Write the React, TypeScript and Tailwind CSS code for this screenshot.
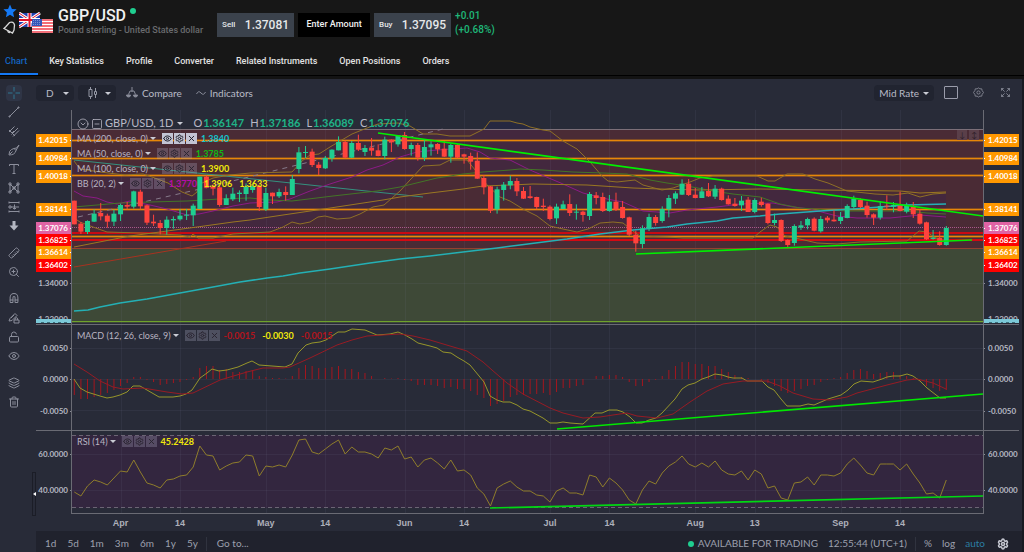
import type { ReactNode } from 'react';
import {
    CircleChevronDown,
    Eye,
    Layers,
    LockOpen,
    Magnet,
    Ruler,
    Settings,
    SquareMinus,
    Trash2,
    X,
    ZoomIn,
} from 'lucide-react';

// plot geometry, in chart units
const LEFT = 72;
const TOP = 110;
const PLOT_WIDTH = 911;
const STEP = 6.606;
const barX = (i: number) => 74.3 + STEP * i;
const priceY = (v: number) => 76 + v / 3;

type Candle = [up: 0 | 1, top: number, bottom: number, high: number, low: number];

const CANDLES: Candle[] = [
    [0, 374, 445, 374, 445], [0, 443, 467, 438, 474], [1, 435, 468, 433, 474], [1, 413, 437, 400, 438],
    [0, 411, 421, 381, 433], [0, 419, 437, 413, 455], [1, 413, 437, 400, 450], [1, 387, 415, 383, 435],
    [0, 387, 392, 378, 400], [1, 346, 392, 344, 398], [0, 347, 391, 341, 400], [0, 388, 440, 386, 447],
    [0, 437, 442, 416, 450], [0, 441, 456, 432, 475], [1, 431, 456, 421, 476], [1, 429, 433, 421, 458],
    [1, 419, 430, 399, 434], [1, 416, 419, 399, 432], [1, 389, 418, 383, 450], [1, 302, 399, 302, 399],
    [0, 302, 335, 298, 337], [0, 332, 338, 325, 358], [0, 334, 387, 330, 392], [1, 367, 387, 355, 387],
    [1, 353, 370, 335, 375], [1, 350, 354, 343, 378], [1, 332, 354, 322, 374], [1, 330, 342, 325, 350],
    [0, 330, 393, 325, 405], [1, 351, 400, 335, 405], [0, 350, 361, 350, 384], [1, 348, 361, 338, 366],
    [0, 348, 357, 331, 374], [1, 309, 357, 297, 357], [1, 229, 279, 213, 292], [1, 228, 231, 210, 246],
    [0, 227, 267, 218, 273], [0, 266, 276, 258, 297], [1, 246, 277, 240, 279], [1, 221, 247, 220, 257],
    [1, 198, 223, 181, 223], [0, 198, 245, 193, 247], [1, 201, 245, 195, 246], [0, 201, 221, 176, 225],
    [1, 216, 228, 207, 240], [0, 215, 224, 186, 239], [0, 223, 240, 205, 241], [1, 191, 240, 182, 250],
    [0, 191, 199, 190, 228], [1, 178, 205, 177, 212], [0, 177, 219, 168, 221], [1, 207, 219, 200, 239],
    [0, 207, 245, 201, 254], [1, 213, 245, 191, 255], [1, 205, 214, 196, 239], [0, 204, 220, 201, 234],
    [0, 218, 242, 195, 243], [1, 207, 242, 203, 260], [0, 207, 245, 205, 247], [0, 235, 242, 233, 263],
    [0, 240, 257, 230, 281], [0, 254, 308, 229, 309], [0, 306, 334, 297, 355], [0, 331, 404, 330, 411],
    [1, 340, 400, 332, 413], [1, 326, 342, 318, 374], [1, 315, 328, 299, 340], [0, 315, 346, 306, 360],
    [0, 345, 368, 333, 369], [0, 361, 366, 330, 368], [0, 363, 393, 362, 400], [0, 389, 393, 368, 405],
    [0, 392, 429, 388, 433], [1, 392, 427, 383, 444], [1, 385, 399, 374, 399], [0, 384, 411, 355, 420],
    [1, 407, 410, 385, 431], [0, 407, 417, 404, 437], [1, 354, 420, 348, 432], [0, 358, 366, 348, 385],
    [0, 363, 405, 350, 408], [1, 377, 405, 357, 407], [0, 377, 401, 350, 405], [0, 393, 426, 375, 428],
    [0, 424, 476, 422, 480], [0, 476, 502, 464, 527], [1, 457, 504, 448, 517], [1, 423, 457, 413, 465],
    [0, 423, 441, 417, 449], [1, 399, 435, 391, 440], [1, 366, 400, 357, 424], [1, 352, 368, 346, 384],
    [1, 323, 356, 310, 357], [0, 323, 357, 309, 360], [0, 356, 366, 336, 367], [1, 346, 366, 333, 366],
    [0, 345, 361, 321, 363], [1, 338, 362, 327, 369], [0, 338, 372, 335, 374], [0, 368, 385, 358, 386],
    [0, 383, 390, 366, 392], [1, 374, 388, 360, 405], [0, 371, 408, 363, 408], [1, 372, 408, 367, 412],
    [0, 377, 387, 365, 392], [0, 383, 441, 382, 445], [1, 432, 441, 413, 448], [0, 432, 495, 430, 498],
    [0, 492, 507, 490, 514], [1, 450, 501, 445, 509], [1, 448, 455, 435, 462], [1, 429, 448, 425, 460],
    [0, 428, 464, 424, 466], [1, 429, 466, 420, 470], [0, 425, 433, 420, 440], [0, 431, 436, 403, 437],
    [1, 423, 435, 408, 444], [1, 390, 426, 385, 427], [1, 368, 393, 359, 398], [0, 372, 393, 367, 396],
    [0, 389, 417, 377, 425], [0, 415, 425, 412, 447], [1, 390, 425, 375, 431], [0, 389, 392, 358, 402],
    [1, 387, 392, 378, 409], [0, 389, 405, 347, 406], [1, 389, 407, 380, 412], [0, 391, 415, 378, 426],
    [0, 413, 443, 401, 446], [0, 439, 490, 437, 492], [1, 485, 489, 462, 491], [0, 486, 507, 466, 509],
    [1, 456, 507, 450, 509],
];

const HISTOGRAM = [
    -16, -20, -20, -18, -16, -14, -11, -7, -4, 2, 2, -1, -3, -6, -5, -4, -3, -1, 2, 11, 13, 13, 9, 10, 7, 7, 8, 9, 3,
    2, 1, 1, 0.5, 3, 11, 14, 13, 11, 11, 12, 13, 10, 10, 7, 6, 3, 0, 1, 0.5, 1, -1, -2, -6, -6, -6, -7, -9, -8, -10,
    -10, -12, -16, -19, -27, -25, -22, -18, -16, -16, -15, -15, -14, -16, -13, -9, -9, -7, -6, 0, 3, 3, 4, 4, 2, -3,
    -7, -7, -3, -1, 3, 9, 13, 17, 17, 15, 15, 13, 13, 10, 7, 4, 2, 1, 0, -1, -4, -7, -12, -14, -12, -10, -7, -6, -3,
    -1, 1, 2, 6, 9, 10, 8, 5, 6, 7, 7, 4, 3, 1, -2, -7, -9, -12, -11,
];

const RSI = [
    492, 496, 486, 480, 482, 485, 478, 471, 472, 460, 472, 483, 485, 488, 480, 479, 476, 475, 467, 446, 455, 456, 470,
    466, 463, 462, 455, 456, 476, 466, 467, 465, 467, 455, 440, 439, 452, 454, 449, 444, 440, 454, 447, 452, 452, 454,
    458, 448, 450, 446, 459, 457, 467, 460, 458, 463, 469, 460, 471, 470, 475, 488, 494, 506, 488, 484, 481, 487, 491,
    491, 495, 496, 502, 491, 488, 493, 493, 495, 475, 477, 487, 478, 483, 490, 500, 504, 490, 481, 484, 473, 466, 462,
    456, 464, 467, 463, 467, 461, 470, 474, 475, 471, 480, 470, 474, 488, 486, 498, 500, 483, 482, 477, 485, 475, 475,
    476, 473, 464, 458, 465, 473, 475, 464, 464, 464, 470, 464, 474, 483, 494, 493, 498, 480,
];

const BB_UPPER =
    '74,161 80,169 100,172 125,175 143,174 152,177 168,183 182,192 192,196 197,192 200,184 213,178 230,175 250,173 292,172 302,161 310,155 319,154 330,147 352,134 367,128 378,124 398,123 410,126 423,134 437,134 450,136 470,136 484,129 490,121 510,121 517,123 523,124 530,127 543,130 550,131 563,141 577,149 590,162 602,176 608,181 617,182 635,180 643,185 662,190 673,188 690,182 700,178 713,176 733,176 757,176 768,181 775,181 787,174 803,174 815,179 828,183 847,191 875,194 893,195 908,193 920,197 933,194 946,193';
const BB_LOWER =
    '74,218 80,222 93,227 107,232 140,233 180,235 190,237 193,234 198,238 213,238 233,234 270,232 283,227 292,222 300,224 310,222 318,217 325,216 337,219 350,218 360,214 373,207 384,205 400,191 410,180 423,166 440,165 450,160 467,160 480,176 488,186 500,197 510,201 523,209 537,216 550,226 563,229 577,232 588,229 600,223 613,222 623,223 633,231 640,236 667,237 683,238 733,238 753,238 760,232 770,225 777,227 785,236 800,239 817,243 837,244 860,242 907,241 919,231 927,232 937,239 946,241';
const BB_MID =
    '74,191 83,196 97,198 107,202 117,204 130,201 150,205 167,209 187,215 199,214 213,211 233,206 250,203 277,202 290,199 310,191 330,184 352,177 367,170 383,165 400,157 417,152 437,150 467,148 480,152 490,158 500,159 510,160 530,170 563,184 583,193 607,199 623,202 643,211 657,212 670,213 687,210 717,207 740,204 773,203 793,207 810,209 837,216 857,218 890,218 920,215 946,217';
const MA_50 =
    '74,207 120,203 150,202 187,201 219,199 250,198 270,200 292,201 333,196 377,191 400,187 437,178 463,174 483,172 510,170 520,169 543,170 573,172 603,173 627,174 650,180 667,183 687,186 713,191 733,194 760,197 780,204 800,208 827,210 847,211 907,211 927,213 946,214';
const MA_100 =
    '74,247 130,236 197,227 233,222 250,220 283,215 317,210 350,205 383,200 400,197 430,193 463,189 483,186 510,185 533,184 587,185 633,188 660,189 700,190 760,189 820,190 900,191 920,193 946,192';
const MA_200 =
    '74,311 88,310 100,307 120,303 147,299 180,293 213,287 240,282 267,278 283,276 300,273 330,269 370,263 400,259 430,256 463,252 497,248 520,245 567,239 600,234 633,230 667,227 687,224 717,221 733,218 760,216 780,214 820,211 853,209 907,205 946,204';
const MACD_LINE =
    '74,379 80,388 87,392 100,396 107,398 113,397 120,395 127,392 133,386 140,386 147,390 159,397 173,397 180,396 186,394 192,390 200,378 207,373 212,369 219,371 227,370 238,367 247,363 252,361 259,365 285,367 292,364 298,353 306,345 312,343 320,342 326,340 338,332 345,332 352,329 365,330 377,335 390,334 398,332 405,335 412,339 418,343 430,346 437,348 443,352 451,353 457,357 464,361 470,365 484,382 490,396 497,400 503,402 510,402 517,405 523,409 530,411 543,418 550,423 557,423 563,422 570,423 583,424 595,413 602,413 609,410 617,410 623,412 630,417 636,423 642,423 649,420 656,418 662,413 675,399 682,389 688,385 695,383 702,379 708,377 715,374 722,375 728,377 733,378 742,378 747,381 762,381 768,387 774,390 781,399 787,406 800,406 808,404 814,405 821,402 828,399 841,395 848,390 854,384 861,381 873,382 882,379 887,377 893,376 900,376 907,374 913,376 920,381 927,388 940,398 946,398';
const MACD_SIGNAL =
    '74,364 87,372 100,381 113,387 123,389 143,388 167,392 182,394 193,393 220,380 247,372 263,368 283,368 290,367 310,358 337,345 352,340 367,336 383,335 400,334 413,336 430,340 450,346 467,351 483,362 492,370 507,383 523,394 550,408 563,413 583,418 600,417 613,415 627,413 637,416 657,418 673,414 690,402 707,391 723,384 743,381 767,381 780,386 793,393 813,399 830,400 847,397 857,393 887,385 907,380 917,379 933,383 946,389';

const TICKS: [number, string][] = [
    [7, 'Apr'],
    [16, '14'],
    [29, 'May'],
    [38, '14'],
    [50, 'Jun'],
    [59, '14'],
    [72, 'Jul'],
    [81, '14'],
    [94, 'Aug'],
    [103, '13'],
    [116, 'Sep'],
    [125, '14'],
];

const TAGS = [
    { y: 140, label: '1.42015', color: '#ff9800' },
    { y: 158, label: '1.40984', color: '#ff9800' },
    { y: 176, label: '1.40018', color: '#ff9800' },
    { y: 209, label: '1.38141', color: '#ff9800' },
    { y: 228, label: '1.37076', color: '#e063a4' },
    { y: 240, label: '1.36825', color: '#ff0000' },
    { y: 252, label: '1.36614', color: '#ff9800' },
    { y: 265, label: '1.36402', color: '#ff0000' },
];

const SCALE = [
    { y: 283, label: '1.34000' },
    { y: 319, label: '1.32000' },
    { y: 348, label: '0.0050' },
    { y: 379, label: '0.0000' },
    { y: 411, label: '-0.0050' },
    { y: 454, label: '60.0000' },
    { y: 490, label: '40.0000' },
];

function Line({ points, color, width = 1 }: { points: string; color: string; width?: number }) {
    return <polyline points={points} fill="none" stroke={color} strokeWidth={width} strokeLinejoin="round" />;
}

function PriceAxis({ side }: { side: 'left' | 'right' }) {
    const left = side === 'left';
    const textX = left ? 32 : 5;
    const anchor = left ? 'end' : 'start';
    const tick = left ? 34 : 0;

    return (
        <svg
            viewBox={`0 ${TOP} 36 404`}
            className="h-[404px] w-9 shrink-0 font-['Lato',sans-serif] text-[8px] font-bold"
            aria-label={`${side} price scale`}
        >
            {SCALE.map((s) => (
                <g key={s.label}>
                    <rect x={tick} y={s.y} width="2" height="1" fill="#8b8d97" />
                    <text x={textX} y={s.y + 3} textAnchor={anchor} fill="#b5b7c2">
                        {s.label}
                    </text>
                </g>
            ))}
            {TAGS.map((t) => (
                <g key={t.label}>
                    <rect x="0" y={t.y - 6} width="36" height="13" fill={t.color} />
                    <rect x={tick} y={t.y} width="2" height="1" fill="#fff" />
                    <text x={textX} y={t.y + 3} textAnchor={anchor} fill="#fff">
                        {t.label}
                    </text>
                </g>
            ))}
            <rect x="0" y="319" width="36" height="4" fill="#7cc9d8" />
            <path d={left ? 'M5 322.5h3m3 0h3m3 0h2m3 0h3m3 0h3' : 'M6 322.5h3m3 0h3m3 0h2m3 0h3m3 0h3'} stroke="#3d6f7b" />
            <rect x="0" y="324" width="36" height="1" fill="#6a6b74" />
            <rect x="0" y="430" width="36" height="1" fill="#6a6b74" />
            <rect x={left ? 35 : 0} y={TOP} width="1" height="404" fill="#6a6b74" />
        </svg>
    );
}

function Plot() {
    const rsiPoints = RSI.map((y, i) => `${barX(i)},${y}`).join(' ');
    const reversedLower = BB_LOWER.split(' ').reverse().join(' ');

    return (
        <svg
            viewBox={`${LEFT} ${TOP} ${PLOT_WIDTH} 404`}
            preserveAspectRatio="none"
            className="block h-[404px] w-full"
            role="img"
            aria-label="GBP/USD daily chart"
        >
            <rect x={LEFT} y="129" width={PLOT_WIDTH} height="119" fill="#4a2b35" />
            <rect x={LEFT} y="248" width={PLOT_WIDTH} height="75" fill="#3e4937" />
            <rect x={LEFT} y="435" width={PLOT_WIDTH} height="73" fill="#33263f" />
            <polygon points={`${BB_UPPER} ${reversedLower}`} fill="#1a1a70" opacity="0.15" />

            {TICKS.map(([i]) => (
                <rect key={i} x={Math.round(barX(i))} y={TOP} width="1" height="403" fill="#7d8299" opacity="0.1" />
            ))}
            {[283, 348, 379, 410, 454, 490].map((y) => (
                <rect key={y} x={LEFT} y={y} width={PLOT_WIDTH} height="1" fill="#7d8299" opacity="0.1" />
            ))}

            {/* horizontal levels */}
            <rect x={LEFT} y="129" width={PLOT_WIDTH} height="1" fill="#7c6f78" />
            {[140, 158, 175, 209, 236].map((y) => (
                <g key={y}>
                    <rect x={LEFT} y={y - 1} width={PLOT_WIDTH} height="3" fill="#ff9800" opacity="0.3" />
                    <rect x={LEFT} y={y} width={PLOT_WIDTH} height="1" fill="#e88708" />
                </g>
            ))}
            <rect x={LEFT} y="232" width={PLOT_WIDTH} height="2" fill="#c90a12" />
            <rect x={LEFT} y="239" width={PLOT_WIDTH} height="2" fill="#d50912" />
            <rect x={LEFT} y="248" width={PLOT_WIDTH} height="1" fill="#94402f" />
            <rect x={LEFT} y="321" width={PLOT_WIDTH} height="1" fill="#6fa32c" />
            <path d="M72 227.5H983" stroke="#a8588a" strokeDasharray="1 1" />

            {/* studies */}
            <Line points="74,267 226,241" color="#a83220" />
            <Line points="74,160 423,197" color="#35917f" />
            <path d="M78 217L200 189L443 129" fill="none" stroke="#86798a" strokeDasharray="5 5" />
            <Line points={BB_UPPER} color="#8f7026" />
            <Line points={BB_LOWER} color="#8f7026" />
            <Line points={BB_MID} color="#8d1a86" />
            <Line points={MA_50} color="#437527" />
            <Line points={MA_100} color="#9a7722" />
            <Line points={MA_200} color="#24b0b5" width={1.5} />

            {CANDLES.map(([up, top, bottom, high, low], i) => {
                const color = up ? '#1fce90' : '#ff433d';
                const x = barX(i);
                return (
                    <g key={i} fill={color}>
                        <rect x={x - 0.5} y={priceY(high)} width="1" height={(low - high) / 3} />
                        <rect x={x - 2.5} y={priceY(top)} width="5" height={Math.max((bottom - top) / 3, 1)} />
                    </g>
                );
            })}

            <Line points="378,133 983,216" color="#00f000" width={1.7} />
            <Line points="636,254 972,240" color="#00f000" width={1.7} />

            {/* MACD */}
            {HISTOGRAM.map((v, i) => (
                <rect
                    key={i}
                    x={barX(i) - 0.5}
                    y={v > 0 ? 379 - v : 379}
                    width="1"
                    height={Math.abs(v)}
                    fill="#a5161e"
                />
            ))}
            <Line points={MACD_LINE} color="#96952a" />
            <Line points={MACD_SIGNAL} color="#971b24" />
            <Line points="557,429 983,394" color="#00e800" width={1.7} />

            {/* RSI */}
            <path d="M72 435.5H983M72 507.5H983" stroke="#6b6474" strokeDasharray="4 3" />
            <Line points={rsiPoints} color="#8f7d2b" />
            <Line points="490,508 983,496" color="#00d813" width={1.7} />

            <rect x={LEFT} y="324" width={PLOT_WIDTH} height="1" fill="#6a6b74" />
            <rect x={LEFT} y="430" width={PLOT_WIDTH} height="1" fill="#6a6b74" />
            <rect x={LEFT} y="513" width={PLOT_WIDTH} height="1" fill="#6a6b74" />
        </svg>
    );
}

function Caret() {
    return <span className="h-0 w-0 border-x-[3px] border-t-[3px] border-x-transparent border-t-[#c9cbd4]" />;
}

type Value = { text: string; className: string };

function StudyRow({ name, values, active = false }: { name: string; values: Value[]; active?: boolean }) {
    const box = `grid size-[11px] place-items-center ${
        active ? 'bg-[#c3c4d4] text-[#1c1c28]' : 'bg-[#a9a6bd]/30 text-[#2a2430]'
    }`;

    return (
        <div className="flex h-[15px] items-center text-[9px] whitespace-nowrap text-[#b9b4c2]">
            <span>{name}</span>
            <span className="ml-0.5 flex">
                <Caret />
            </span>
            <span className="ml-1.5 flex gap-px">
                <button type="button" aria-label={`Hide ${name}`} className={box}>
                    <Eye className="size-[9px]" strokeWidth={2.5} />
                </button>
                <button type="button" aria-label={`${name} settings`} className={box}>
                    <Settings className="size-[9px]" strokeWidth={2.5} />
                </button>
                <button type="button" aria-label={`Remove ${name}`} className={box}>
                    <X className="size-[9px]" strokeWidth={2.5} />
                </button>
            </span>
            <span className="ml-1 flex gap-[7px] font-bold">
                {values.map((v, i) => (
                    <span key={i} className={v.className}>
                        {v.text}
                    </span>
                ))}
            </span>
        </div>
    );
}

function Quote({ label, value }: { label: string; value: string }) {
    return (
        <div className="flex items-baseline gap-px">
            <span>{label}</span>
            <span className="font-bold text-[#1fb387]">{value}</span>
        </div>
    );
}

function Chart() {
    return (
        <section className="flex bg-[#282b38]">
            <PriceAxis side="left" />
            <div className="relative min-w-0 flex-1">
                <Plot />
                <svg className="block h-[17px] w-full font-['Liberation_Sans',sans-serif] text-[9px] font-bold">
                    {TICKS.map(([i, label]) => (
                        <text
                            key={i}
                            x={`${((barX(i) - LEFT) / PLOT_WIDTH) * 100}%`}
                            y="12"
                            textAnchor="middle"
                            fill="#aeb0bb"
                        >
                            {label}
                        </text>
                    ))}
                </svg>

                <div className="absolute top-1.5 left-[5px] text-[#b9b9c6]">
                    <div className="flex h-[15px] items-center text-[11px] whitespace-nowrap">
                        <CircleChevronDown className="size-3" strokeWidth={1.5} />
                        <SquareMinus className="ml-0.5 size-3" strokeWidth={1.5} />
                        <span className="mr-1 ml-0.5">GBP/USD, 1D</span>
                        <Caret />
                        <div className="ml-2.5 flex gap-1.5">
                            <Quote label="O" value="1.36147" />
                            <Quote label="H" value="1.37186" />
                            <Quote label="L" value="1.36089" />
                            <Quote label="C" value="1.37076" />
                        </div>
                    </div>
                    <StudyRow
                        name="MA (200, close, 0)"
                        active
                        values={[{ text: '1.3840', className: 'text-[#16c3cc]' }]}
                    />
                    <StudyRow name="MA (50, close, 0)" values={[{ text: '1.3785', className: 'text-[#12bb12]' }]} />
                    <StudyRow name="MA (100, close, 0)" values={[{ text: '1.3900', className: 'text-[#f0e80a]' }]} />
                    <StudyRow
                        name="BB (20, 2)"
                        values={[
                            { text: '1.3770', className: 'text-[#b80cab]' },
                            { text: '1.3906', className: 'text-[#f0e80a]' },
                            { text: '1.3633', className: 'text-[#f0e80a]' },
                        ]}
                    />
                </div>
                <div className="absolute top-[218px] left-[5px]">
                    <StudyRow
                        name="MACD (12, 26, close, 9)"
                        values={[
                            { text: '-0.0015', className: 'text-[#b3141c]' },
                            { text: '-0.0030', className: 'text-[#f0e80a]' },
                            { text: '-0.0015', className: 'text-[#b3141c]' },
                        ]}
                    />
                </div>
                <div className="absolute top-[324px] left-[5px]">
                    <StudyRow name="RSI (14)" values={[{ text: '45.2428', className: 'text-[#f0e80a]' }]} />
                </div>
                <div className="absolute top-5 right-1 flex gap-0.5 text-[8px] leading-none text-[#2f2029]">
                    <button type="button" aria-label="Move pane down" className="h-[10px] w-[10px] bg-[#5a3f49]">
                        ↓
                    </button>
                    <button type="button" aria-label="Resize pane" className="h-[10px] w-[10px] bg-[#5a3f49]">
                        ↕
                    </button>
                </div>
            </div>
            <PriceAxis side="right" />
        </section>
    );
}

function Tool({ label, gap = false, active = false, children }: {
    label: string;
    gap?: boolean;
    active?: boolean;
    children: ReactNode;
}) {
    return (
        <button
            type="button"
            aria-label={label}
            className={`grid size-4 place-items-center rounded-sm ${gap ? 'mt-2' : ''} ${active ? 'bg-[#2f3546] text-[#2e7790]' : ''}`}
        >
            {children}
        </button>
    );
}

function Glyph({ d }: { d: string }) {
    return (
        <svg viewBox="0 0 12 12" className="size-3" fill="none" stroke="currentColor">
            <path d={d} />
        </svg>
    );
}

function DrawingTools() {
    return (
        <aside className="relative flex w-9 shrink-0 flex-col items-start gap-[3px] bg-[#282b38] pt-1.5 pl-1.5 text-[#8c8f9c]">
            <Tool label="Crosshair" active>
                <Glyph d="M6 0v4.5M6 7.5V12M0 6h4.5M7.5 6H12" />
            </Tool>
            <Tool label="Trend line">
                <Glyph d="M2 10L10 2M1 10h1v1h-1zM10 1h1v1h-1z" />
            </Tool>
            <Tool label="Pitchfork">
                <Glyph d="M1 7L6.500 1.500M3.500 9.500L10 3M5 11.500L11 5.500M1 5l6 6M4 8l2-2" />
            </Tool>
            <Tool label="Brush">
                <Glyph d="M1 11Q1 6.500 3.500 5.500L6 4.500L8 6.500Q7 11 1 11zM2 10l2.500-2.500M6 4.500L8.500 4L11 1L8 6.500" />
            </Tool>
            <Tool label="Text">
                <Glyph d="M1.500 3V1.500h9V3M6 1.500v9M4.500 10.500h3" />
            </Tool>
            <Tool label="Pattern">
                <Glyph d="M2 2v8l4-4 4 4V2L6 6zM1 1h2v2H1zM9 1h2v2H9zM1 9h2v2H1zM9 9h2v2H9zM5 5h2v2H5z" />
            </Tool>
            <Tool label="Long position">
                <Glyph d="M1 1.500h10M3 6h8M1 10.500h10M1 .500v2M11 .500v2M1 5h2v2H1zM1 9.500v2M11 9.500v2M6.500 3.500v5M5 7.500h3" />
            </Tool>
            <Tool label="More tools">
                <svg viewBox="0 0 12 12" className="size-3 text-[#b4b7c2]" fill="currentColor">
                    <path d="M4.500 1h3v4.500h3L6 10.500 1.500 5.500h3z" />
                </svg>
            </Tool>
            <Tool label="Measure" gap>
                <Ruler className="size-3 rotate-90" />
            </Tool>
            <Tool label="Zoom in">
                <ZoomIn className="size-3" />
            </Tool>
            <Tool label="Magnet" gap>
                <Magnet className="size-3 -rotate-45" />
            </Tool>
            <Tool label="Stay in drawing mode">
                <Glyph d="M1 9L2 6.500 7 1.500l2 2L4 8.500zM3 6l3-3M7 8V7a1.300 1.300 0 0 1 2.600 0v1M6 8h5v3H6z" />
            </Tool>
            <Tool label="Lock drawings">
                <LockOpen className="size-3" />
            </Tool>
            <Tool label="Hide drawings">
                <Eye className="size-3" />
            </Tool>
            <Tool label="Layers" gap>
                <Layers className="size-3" />
            </Tool>
            <Tool label="Delete">
                <Trash2 className="size-3" />
            </Tool>
            <button
                type="button"
                aria-label="Collapse toolbar"
                className="absolute top-[393px] right-0 grid h-11 w-1 place-items-center border border-[#1b1d27]"
            >
                <span className="h-0 w-0 border-y-2 border-r-[3px] border-y-transparent border-r-white" />
            </button>
        </aside>
    );
}

function ChartToolbar() {
    return (
        <div className="flex h-[31px] items-start bg-[#282b38] pt-1.5 text-[10px] text-[#b9bbc7]">
            <button type="button" className="flex h-4 w-[38px] items-center justify-between rounded-sm bg-[#212430] px-[5px] pl-2.5">
                D <Caret />
            </button>
            <button
                type="button"
                aria-label="Chart type"
                className="ml-1 flex h-4 w-[38px] items-center justify-between rounded-sm bg-[#212430] px-[5px] pl-2.5"
            >
                <svg viewBox="0 0 10 12" className="h-3 w-2.5" fill="none" stroke="#9598a5">
                    <path d="M2.500 0v2M2.500 10v2M1 2.500h3v7H1zM7.500 1v3M7.500 8v3M6.500 4.500h2v3h-2z" />
                </svg>
                <Caret />
            </button>
            <button type="button" className="ml-2.5 flex h-4 items-center gap-1">
                <svg viewBox="0 0 12 12" className="size-3" fill="none" stroke="#8a8d9a">
                    <path d="M6 0v5M2.500 7.500L4 4h4l1.500 3.500" />
                    <path d="M.500 8a2 2 0 0 0 4 0zM7.500 8a2 2 0 0 0 4 0z" fill="#8a8d9a" />
                </svg>
                Compare
            </button>
            <button type="button" className="ml-3.5 flex h-4 items-center gap-1">
                <svg viewBox="0 0 10 6" className="h-1.5 w-2.5" fill="none" stroke="#8a8d9a">
                    <path d="M.500 4Q2.500 0 5 3t4.500-1" />
                </svg>
                Indicators
            </button>
            <div className="flex-1" />
            <button type="button" className="flex h-4 items-center gap-1 rounded-sm bg-[#212430] px-[5px]">
                Mid Rate <Caret />
            </button>
            <button type="button" aria-label="Layout" className="ml-2.5 mt-px h-[13px] w-[14px] rounded-[1px] border border-[#9a9caa]" />
            <button type="button" aria-label="Settings" className="mt-0.5 ml-[15px] text-[#858894]">
                <svg viewBox="0 0 24 24" className="size-[11px]" fill="none" stroke="currentColor" strokeWidth="2">
                    <path d="M12 2l3 2 4 0 1 4 3 4-3 4-1 4-4 0-3 2-3-2-4 0-1-4-3-4 3-4 1-4 4 0z" />
                    <circle cx="12" cy="12" r="3.500" />
                </svg>
            </button>
            <button type="button" aria-label="Full screen" className="mt-[3px] mr-3 ml-[17px] text-[#858894]">
                <svg viewBox="0 0 10 10" className="size-[9px]" fill="none" stroke="currentColor">
                    <path d="M.500 3V.500H3M.500.500L4 4M7 .500h2.500V3M9.500.500L6 4M.500 7v2.500H3M.500 9.500L4 6M7 9.500h2.500V7M9.500 9.500L6 6" />
                </svg>
            </button>
        </div>
    );
}

const RANGES = ['1d', '5d', '1m', '3m', '6m', '1y', '5y'];

function BottomBar() {
    return (
        <footer className="flex h-[21px] items-center bg-[#20222d] pt-1 text-[10px] whitespace-nowrap text-[#9da0ad]">
            <div className="ml-[9px] flex gap-[11px]">
                {RANGES.map((r) => (
                    <button key={r} type="button">
                        {r}
                    </button>
                ))}
            </div>
            <span className="mr-2.5 ml-2 h-3.5 w-px bg-[#30333f]" />
            <button type="button">Go to...</button>
            <div className="flex-1" />
            <span className="size-1.5 rounded-full bg-[#1fce90]" />
            <span className="mr-2.5 ml-1">AVAILABLE FOR TRADING</span>
            <span>12:55:44 (UTC+1)</span>
            <span className="mx-2 h-3.5 w-px bg-[#30333f]" />
            <div className="mr-[13px] flex items-center gap-2.5">
                <button type="button">%</button>
                <button type="button">log</button>
                <button type="button" className="text-[#2b7da3]">
                    auto
                </button>
                <button type="button" aria-label="Scale settings" className="ml-0.5">
                    <Settings className="size-3 text-[#c5c7d0]" strokeWidth={3} />
                </button>
            </div>
        </footer>
    );
}

function Flags() {
    return (
        <svg viewBox="0 0 36 22" className="h-[22px] w-9 shrink-0">
            <rect x="0" y="1" width="21" height="14" fill="#1f3fb0" />
            <path d="M0 1l21 14M21 1L0 15" stroke="#fff" strokeWidth="3" />
            <path d="M0 1l21 14M21 1L0 15" stroke="#e0142c" strokeWidth="1" />
            <path d="M10.500 1v14M0 8h21" stroke="#fff" strokeWidth="4" />
            <path d="M10.500 1v14M0 8h21" stroke="#e0142c" strokeWidth="2" />
            <rect x="13" y="7" width="21" height="14" fill="#fff" />
            <path d="M13 8h21M13 11h21M13 14h21M13 17h21M13 20h21" stroke="#f0404c" strokeWidth="1.600" />
            <rect x="13" y="7" width="10" height="7" fill="#3557b8" />
            <path d="M14 8.500h8M14 10.500h8M14 12.500h8" stroke="#a9b8e6" strokeWidth="0.600" strokeDasharray="1 1" />
        </svg>
    );
}

function TradeButton({ label, price }: { label: string; price: string }) {
    return (
        <button type="button" className="flex h-6 w-[77px] items-center justify-between bg-[#3b424c] px-[5px] font-medium text-[#e6e8ea]">
            <span className="text-[8px]">{label}</span>
            <span className="text-[12px]">{price}</span>
        </button>
    );
}

const TABS = ['Chart', 'Key Statistics', 'Profile', 'Converter', 'Related Instruments', 'Open Positions', 'Orders'];

function Header() {
    return (
        <header className="bg-[#171717] font-['Roboto',sans-serif]">
            <div className="flex h-[49px] items-start whitespace-nowrap">
                <div className="flex w-[18px] flex-col items-center gap-0.5 pt-1 pl-0.5">
                    <button type="button" aria-label="Favourite">
                        <svg viewBox="0 0 24 24" className="block size-[14px]" fill="#1479f5">
                            <path d="M12 1l3.300 7.400 8 .800-6 5.400 1.700 7.900L12 18.400 5 22.500l1.700-7.900-6-5.400 8-.800z" />
                        </svg>
                    </button>
                    <button type="button" aria-label="Alerts">
                        <svg viewBox="0 0 14 14" className="block size-[14px]" fill="none" stroke="#d8d8d8" strokeWidth="1.300">
                            <path d="M1 8.500L9.500 13l1.500-3 .500-5C11 2.500 9 1.500 6.500 2.500L3 6.500z" />
                            <path d="M5 10.500q-.500 2 2 2" />
                        </svg>
                    </button>
                </div>
                <div className="ml-px pt-3">
                    <Flags />
                </div>
                <div className="ml-[3px] pt-[7px]">
                    <div className="flex items-start gap-1">
                        <h1 className="text-[16px] leading-[17px] font-medium text-[#f1f1f1]">GBP/USD</h1>
                        <span className="mt-px size-1.5 rounded-full bg-[#1fce90]" />
                    </div>
                    <p className="text-[9px] leading-3 font-medium text-[#696b6e]">Pound sterling - United States dollar</p>
                </div>
                <div className="ml-3.5 flex gap-1 pt-[13px]">
                    <TradeButton label="Sell" price="1.37081" />
                    <button type="button" className="h-6 w-[72px] bg-black text-[9px] font-medium text-[#f1f1f1]">
                        Enter Amount
                    </button>
                    <TradeButton label="Buy" price="1.37095" />
                </div>
                <div className="ml-1 pt-[9px] text-[10px] leading-[14px] font-medium text-[#1fb879]">
                    <div>+0.01</div>
                    <div>(+0.68%)</div>
                </div>
            </div>
            <nav className="flex border-b border-black text-[9px] font-medium text-[#e2e2e2]">
                {TABS.map((tab, i) => (
                    <a
                        key={tab}
                        href="#"
                        className={
                            i === 0
                                ? 'border-b-2 border-[#1479f5] pr-[11px] pl-[5px] leading-6 text-[#1464c0]'
                                : 'px-[11px] leading-6'
                        }
                    >
                        {tab}
                    </a>
                ))}
            </nav>
            <div className="h-[3px] bg-[#131313]" />
        </header>
    );
}

export default function App() {
    return (
        <div className="min-h-screen bg-[#282b38]">
            <Header />
            <main className="flex border-r-2 border-[#171a21] font-['Lato',sans-serif]">
                <DrawingTools />
                <div className="min-w-0 flex-1">
                    <ChartToolbar />
                    <div className="pr-[3px]">
                        <Chart />
                    </div>
                    <BottomBar />
                </div>
            </main>
        </div>
    );
}
